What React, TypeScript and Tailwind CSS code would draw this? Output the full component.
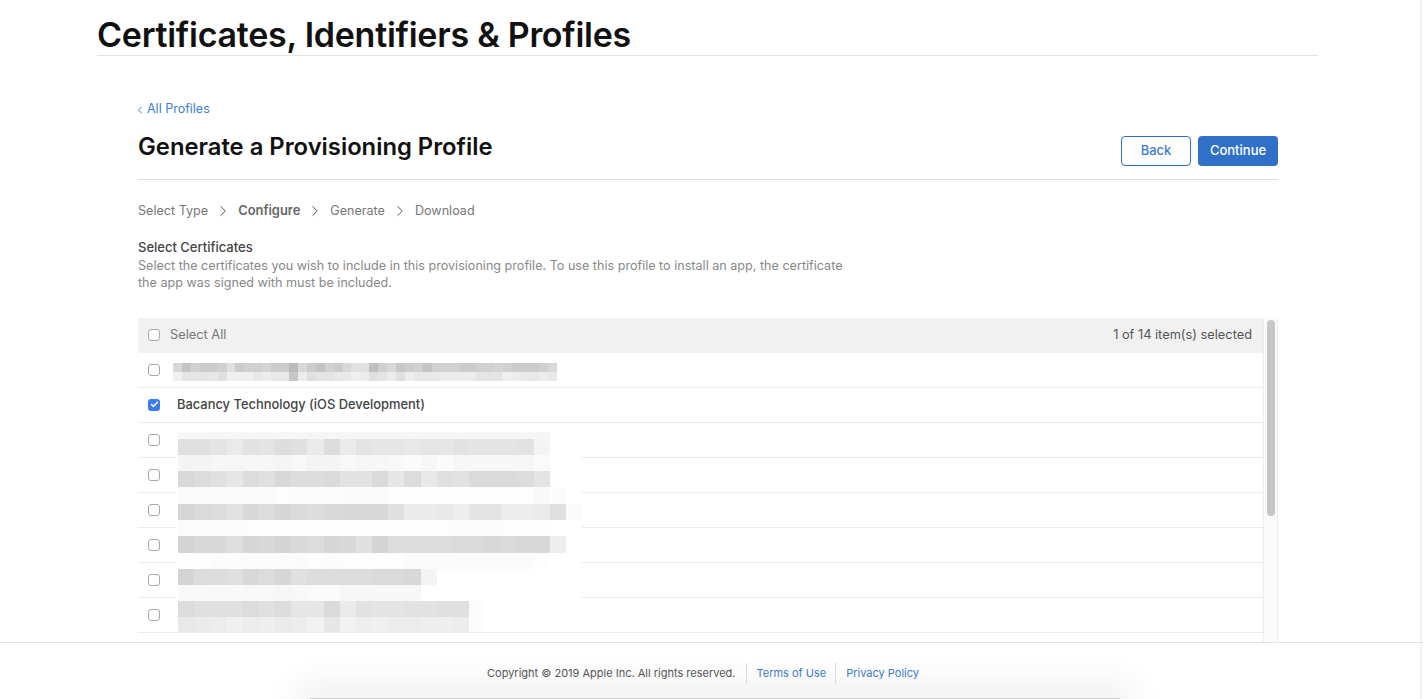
import { Check, ChevronLeft, ChevronRight } from "lucide-react";

const FONT = "[font-family:Inter,'Liberation_Sans',sans-serif]";

// pixelated (redacted) certificate names, grey values per cell
const thinBands: string[][] = [
  "d8 c4 d0 cc cc d0 e0 cc d0 d0 d4 cc cc bb d8 cc c4 d0 cc d8 e0 e0 c0 d0 d8 c8 cc d0 c4 d0 d0 d0 cc cc d0 d0 d4 d0 cc cc cc d0 d8".split(" "),
  "f0 e4 e4 e4 e8 e0 f0 f0 f0 e8 ec e8 e8 c8 ec e0 e4 e4 e8 e8 f0 ec e0 e4 ec e0 ec e8 e8 e8 ec ec ec ec e4 e4 e4 f0 ec e8 e8 ec e8".split(" "),
];

const wideBands: { h: number; cells: string[] }[] = [
  { h: 7, cells: Array(23).fill("f6") },
  { h: 16, cells: "e0 e0 e4 ea e2 e4 dd e0 ea dc ea e3 e6 e6 e8 e5 e6 e2 e4 e4 e4 e2 f4".split(" ") },
  { h: 16, cells: "f4 f4 f6 f6 f6 f6 f5 f8 f4 f4 f8 f6 f6 f8 fb f7 fb f6 f6 f6 f6 f6 fa".split(" ") },
  { h: 16, cells: "d9 dc e0 e6 dc e0 d8 dd dd da e2 e2 da e6 dc e8 e0 e2 da da da dc e4".split(" ") },
  { h: 17, cells: "fa fa fa fb fb fb fd fc fc fc fb fb fb fd fd fd fd fd fd fd fd fd f9 fc".split(" ") },
  { h: 16, cells: "d6 da dc e2 d8 dc d6 da dd d9 d8 d8 d8 e0 eb eb e8 ee e4 e4 ec ec ea e0 fa".split(" ") },
  { h: 16, cells: "fc fc fc fc fd fd fd fd fd fd fd fd fd fd fd fd fd fc fc fc fd fd fe".split(" ") },
  { h: 17, cells: "d4 d8 d8 de d6 d8 d4 d9 dc d6 d8 e0 d4 dc dc dc dc da da d8 da d8 d8 ee".split(" ") },
  { h: 16, cells: "fe fe fc fc fc fc fc fb fd fc fd fd fd fd fb fb fb fb fb fb fb fb fd".split(" ") },
  { h: 16, cells: "d4 dc dd e0 d8 dc d6 e0 dc dc dc dc da da d8 f4".split(" ") },
  { h: 16, cells: "f8 f8 f8 f9 f8 f8 f7 f8 fa fb f6 f6 f7 f7 f7".split(" ") },
  { h: 16, cells: "dc e0 e0 e0 dc e0 dc e6 e6 da ea e2 e4 e4 e2 e2 e0 e0 fc".split(" ") },
  { h: 15, cells: "e8 ea ec f0 ec ee ea ec f2 e6 f2 ee f0 ec ec ee ee ec fc".split(" ") },
];

function Box({ checked }: { checked?: boolean }) {
  if (checked) {
    return (
      <span className="flex h-3 w-3 shrink-0 items-center justify-center rounded-[3px] bg-[#3b7cf4]">
        <Check className="h-[9px] w-[9px] text-white" strokeWidth={4} />
      </span>
    );
  }
  return <span className="h-3 w-3 shrink-0 rounded-[3px] border border-[#a9a9a9] bg-white" />;
}

function Row({ children, checked }: { children?: React.ReactNode; checked?: boolean }) {
  return (
    <div className="flex h-[35px] items-center border-b border-[#ececec] pl-[10px]">
      <Box checked={checked} />
      {children}
    </div>
  );
}

function Step({ label, active }: { label: string; active?: boolean }) {
  return <span className={active ? "text-[12.9px] font-semibold text-[#666]" : "text-[#777]"}>{label}</span>;
}

function Arrow() {
  return <ChevronRight className="mx-[6px] h-[18px] w-[18px] text-[#555]" strokeWidth={1.3} />;
}

export default function App() {
  return (
    <div className={`${FONT} flex h-[699px] w-[1423px] flex-col overflow-hidden bg-white`}>
      <div className="flex min-h-0 flex-1 flex-col overflow-hidden">
        <div className="ml-[97px] h-[56px] w-[1221px] shrink-0 border-b border-[#e2e2e2] pt-[14px]">
          <h1 className="text-[34px] leading-[41px] font-semibold tracking-[-0.26px] text-[#111]">
            Certificates, Identifiers &amp; Profiles
          </h1>
        </div>

        <div className="ml-[138px] w-[1140px] shrink-0 pt-[45px]">
          <a className="flex h-[17px] items-center text-[12.5px] text-[#3d7fd9]">
            <ChevronLeft className="mr-px -ml-[4px] h-[12px] w-[12px]" strokeWidth={2} />
            All Profiles
          </a>

          <div className="mt-[18px] flex h-[44px] justify-between border-b border-[#dcdcdc]">
            <h2 className="text-[23.8px] leading-[22px] font-semibold text-[#111]">Generate a Provisioning Profile</h2>
            <div className="flex gap-[7px]">
              <button className="h-[30px] w-[70px] rounded-[4px] border border-[#3170c9] text-[13px] font-medium text-[#3d7bd0]">
                Back
              </button>
              <button className="h-[30px] w-[80px] rounded-[4px] bg-[#3170c9] text-[13px] font-medium text-white">
                Continue
              </button>
            </div>
          </div>

          <div className="mt-[22px] flex h-[18px] items-center text-[12.6px]">
            <Step label="Select Type" />
            <Arrow />
            <Step label="Configure" active />
            <Arrow />
            <Step label="Generate" />
            <Arrow />
            <Step label="Download" />
          </div>

          <div className="mt-[19px] text-[12.6px] leading-[17.5px]">
            <p className="text-[13px] font-medium text-[#444]">Select Certificates</p>
            <p className="w-[720px] text-[#888]">
              Select the certificates you wish to include in this provisioning profile. To use this profile to install an app, the certificate the app was signed with must be included.
            </p>
          </div>

          <div className="relative mt-[26px] flex">
            <div className="min-w-0 flex-1">
              <div className="flex h-[35px] items-center justify-between bg-[#f1f1f1] pr-[11px] pl-[10px] text-[12.8px]">
                <span className="flex items-center gap-[10px] text-[#777]">
                  <Box />
                  Select All
                </span>
                <span className="text-[#555]">1 of 14 item(s) selected</span>
              </div>
              <Row />
              <Row checked>
                <span className="ml-[17px] text-[12.9px] font-medium text-[#444]">Bacancy Technology (iOS Development)</span>
              </Row>
              <Row />
              <Row />
              <Row />
              <Row />
              <Row />
              <Row />
              <Row />
            </div>
            <div className="w-[15px] shrink-0 border-x border-[#ececec] bg-[#fafafa] px-[3px] pt-[2px]">
              <div className="h-[196px] w-[8px] rounded-[4px] bg-[#c6c6c6]" />
            </div>

            {/* blurred certificate names */}
            <div className="absolute top-[45px] left-[35px] w-[390px]">
              {thinBands.map((cells, b) => (
                <div key={b} className="flex h-[9px]">
                  {cells.map((c, i) => (
                    <span key={i} className="w-[8.93px] shrink-0" style={{ background: `#${c}${c}${c}` }} />
                  ))}
                </div>
              ))}
            </div>
            <div className="absolute top-[114px] left-[38px] w-[406px] bg-white pl-[2px]">
              {wideBands.map((band, b) => (
                <div key={b} className="flex" style={{ height: band.h }}>
                  {band.cells.map((c, i) => (
                    <span key={i} className="w-[16.18px] shrink-0" style={{ background: `#${c}${c}${c}` }} />
                  ))}
                </div>
              ))}
            </div>
          </div>
        </div>
      </div>

      <footer className="relative flex h-[57px] shrink-0 items-center justify-center overflow-hidden border-t border-[#e2e2e2] bg-white pt-[4px] pr-[17px] text-[11px]">
        <div className="absolute bottom-0 left-[310px] h-px w-[810px] bg-[#cfcfcf] shadow-[0_0_34px_14px_rgba(0,0,0,0.07)]" />
        <span className="relative pr-[10px] text-[#555]">Copyright © 2019 Apple Inc. All rights reserved.</span>
        <a className="relative flex h-[21px] items-center border-l border-[#dcdcdc] pr-[9px] pl-[10px] text-[#3d7bd0]">Terms of Use</a>
        <a className="relative flex h-[21px] items-center border-l border-[#dcdcdc] pl-[10px] text-[#3d7bd0]">Privacy Policy</a>
      </footer>
      <div className="absolute top-0 left-[1420px] h-[699px] w-[2px] bg-[#f0f0f0]" />
    </div>
  );
}
